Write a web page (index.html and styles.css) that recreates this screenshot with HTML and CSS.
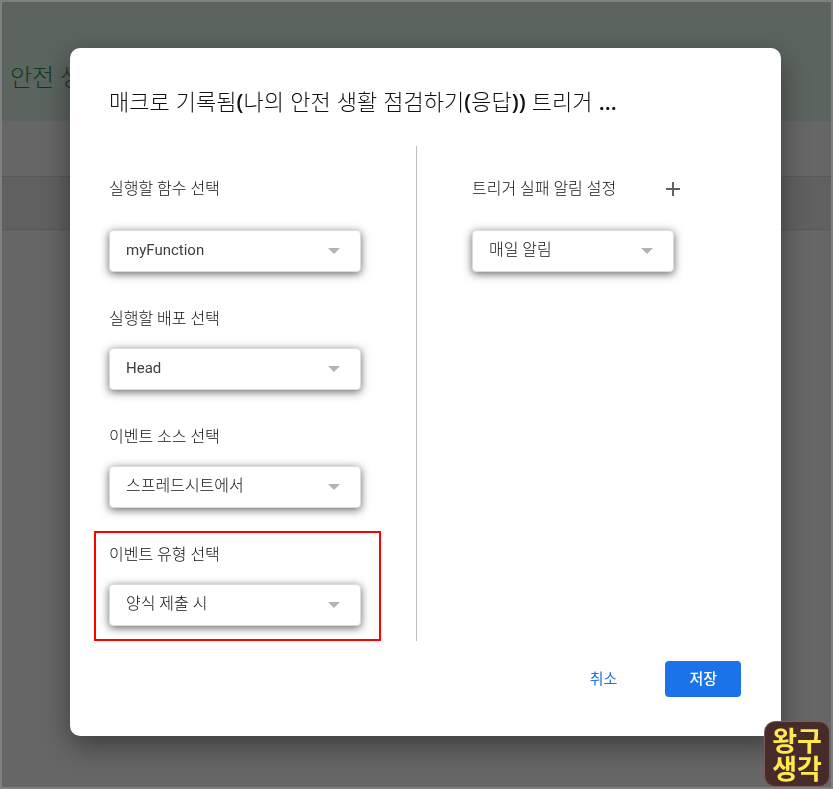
FILE: index.html
```html
<!DOCTYPE html>
<html lang="ko">
<head>
    <meta charset="UTF-8">
    <meta name="viewport" content="width=device-width, initial-scale=1.0">
    <title>트리거 추가</title>
    <link rel="stylesheet" href="styles.css">
</head>
<body>
    <div class="page">
        <header class="page-header">안전 생활</header>
        <div class="page-filter"></div>
        <div class="page-row"></div>
    </div>

    <div class="backdrop">
        <form class="dialog" role="dialog" aria-labelledby="dialogTitle">
            <h1 id="dialogTitle">매크로 기록됨<b>(</b>나의 안전 생활 점검하기<b>(</b>응답<b>))</b> 트리거 <b>...</b></h1>

            <div class="columns">
                <div class="column">
                    <div class="form-group">
                        <div class="label-row">
                            <label for="func">실행할 함수 선택</label>
                        </div>
                        <div class="select">
                            <select id="func" class="latin"><option>myFunction</option></select>
                            <svg viewBox="0 0 12 6"><path d="M0 0h12L6 6z"/></svg>
                        </div>
                    </div>
                    <div class="form-group">
                        <label for="deploy">실행할 배포 선택</label>
                        <div class="select">
                            <select id="deploy" class="latin"><option>Head</option></select>
                            <svg viewBox="0 0 12 6"><path d="M0 0h12L6 6z"/></svg>
                        </div>
                    </div>
                    <div class="form-group">
                        <label for="source">이벤트 소스 선택</label>
                        <div class="select">
                            <select id="source"><option>스프레드시트에서</option></select>
                            <svg viewBox="0 0 12 6"><path d="M0 0h12L6 6z"/></svg>
                        </div>
                    </div>
                    <div class="form-group marked">
                        <label for="type">이벤트 유형 선택</label>
                        <div class="select">
                            <select id="type"><option>양식 제출 시</option></select>
                            <svg viewBox="0 0 12 6"><path d="M0 0h12L6 6z"/></svg>
                        </div>
                    </div>
                </div>

                <div class="column side">
                    <div class="form-group">
                        <div class="label-row">
                            <label for="notify">트리거 실패 알림 설정</label>
                            <button type="button" class="add" aria-label="알림 추가">
                                <svg viewBox="0 0 14 14"><path d="M6 0h2v6h6v2H8v6H6V8H0V6h6z"/></svg>
                            </button>
                        </div>
                        <div class="select">
                            <select id="notify"><option>매일 알림</option></select>
                            <svg viewBox="0 0 12 6"><path d="M0 0h12L6 6z"/></svg>
                        </div>
                    </div>
                </div>
            </div>

            <div class="actions">
                <button type="button" class="cancel">취소</button>
                <button type="submit" class="save">저장</button>
            </div>
        </form>
    </div>

    <div class="badge">
        <div>왕구</div>
        <div>생각</div>
    </div>
</body>
</html>
```

FILE: styles.css
```css
* { box-sizing: border-box; }
body { margin: 0; min-height: 100vh; font-family: Roboto, "Noto Sans CJK KR", sans-serif; font-size: 16px; font-weight: 300; color: #111; }

/* dimmed page behind the dialog */
.page { position: fixed; inset: 0; border: 2px solid #808080; background: #666; overflow: hidden; }
.page-header { height: 119px; padding: 58px 8px 0; background: #5c645f; color: #0d3a1e; font-size: 24px; line-height: 36px; }
.page-filter { height: 55px; }
.page-row { height: 54px; background: #606060; border-top: 1px solid #585858; border-bottom: 1px solid #585858; }

.backdrop { position: relative; padding: 48px 52px 48px 70px; }
.dialog { padding: 35px 40px 39px 39px; background: #fff; border-radius: 10px; box-shadow: 0 10px 28px rgba(0, 0, 0, 0.4); }
h1 { margin: 0 0 27px; font-family: "Liberation Sans", "Noto Sans CJK KR", sans-serif; font-size: 22px; line-height: 36px; font-weight: 300; white-space: nowrap; overflow: hidden; text-overflow: ellipsis; }
h1 b { font-family: "Open Sans", sans-serif; font-weight: 600; }

.columns { display: flex; margin-top: -2px; }
.column { width: 308px; height: 495px; padding: 22px 55px 0 0; border-right: 1px solid #bdbdc2; }
.column.side { width: auto; padding: 22px 0 0 55px; border: 0; }
.side .form-group { width: 202px; }
.form-group { margin-bottom: 32px; }
.label-row { display: flex; align-items: flex-start; justify-content: space-between; height: 62px; }
label { display: block; height: 44px; line-height: 30px; font-size: 16px; }
.label-row label { line-height: 42px; }
.marked { position: relative; }
.marked::after { content: ""; position: absolute; inset: -9px -20px -15px -15px; border: 2px solid #f00; pointer-events: none; }

.select { position: relative; height: 42px; }
.select svg { position: absolute; right: 21px; top: 18px; width: 12px; height: 6px; fill: #b3b3b3; }
select { appearance: none; display: block; width: 100%; height: 42px; padding: 0 40px 4px 16px; border: 1px solid #dadce0; border-radius: 4px; background: #fff; box-shadow: 0 2px 8px rgba(60, 64, 67, 0.8); color: #111; font-family: inherit; font-size: 16px; font-weight: 300; }
.latin { padding-bottom: 2px; color: #3c4043; font-size: 15px; font-weight: 400; }

button { border: 0; background: none; cursor: pointer; font-family: inherit; font-size: 15px; }
.add { padding: 13px 0 0; margin-right: -6px; height: 28px; line-height: 0; }
.add svg { width: 14px; height: 14px; fill: #5f6368; }
.actions { display: flex; justify-content: flex-end; gap: 24px; margin-top: 20px; }
.actions button { height: 36px; padding: 0 24px 4px; border-radius: 4px; }
.cancel { color: #1a73e8; font-weight: 400; }
.actions .save { background: #1a73e8; color: #fff; font-weight: 500; }

.badge { position: fixed; right: 3px; bottom: 2px; width: 66px; height: 66px; padding-top: 6px; border: 1px solid #7a5c5c; border-radius: 11px; background: #472a2a; color: #ffe94f; font-size: 27px; line-height: 28px; font-weight: 700; text-align: center; }
```
